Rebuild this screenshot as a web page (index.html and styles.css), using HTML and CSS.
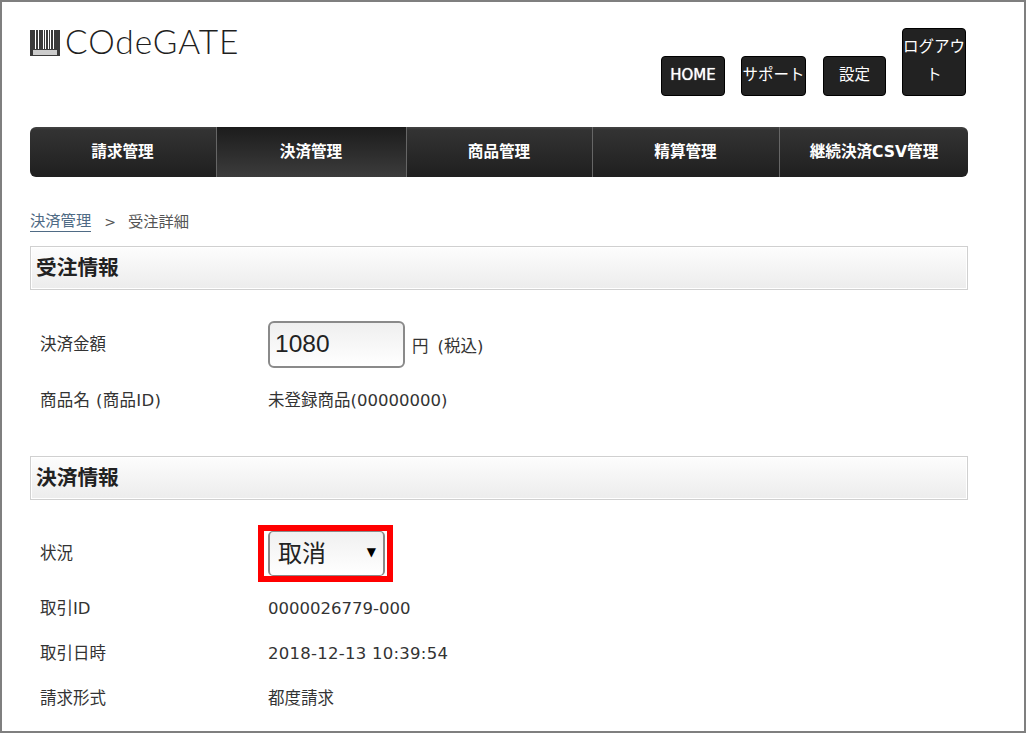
FILE: index.html
```html
<!DOCTYPE html>
<html lang="ja">
<head>
<meta charset="utf-8">
<title>受注詳細</title>
<link rel="stylesheet" href="styles.css">
</head>
<body>
<div class="frame">
  <header class="header">
    <div class="logo">
      <svg class="barcode" width="30" height="26" viewBox="0 0 30 26" aria-hidden="true">
        <rect width="30" height="26" fill="#3a3a3a"/>
        <g fill="#fff">
          <rect x="5" y="0" width="1" height="19"/>
          <rect x="8" y="0" width="1" height="19"/>
          <rect x="13" y="0" width="1" height="19"/>
          <rect x="15" y="0" width="1" height="19"/>
          <rect x="18" y="0" width="1" height="19"/>
          <rect x="20" y="0" width="1" height="19"/>
          <rect x="23" y="0" width="1" height="19"/>
          <rect x="3" y="20" width="24" height="5" fill="#ccc"/>
        </g>
      </svg>
      <span class="logo-text">COdeGATE</span>
    </div>
    <nav class="tools">
      <a class="tool tool-home">HOME</a>
      <a class="tool tool-support">サポート</a>
      <a class="tool tool-settings">設定</a>
      <a class="tool tool-logout">ログアウト</a>
    </nav>
  </header>

  <nav class="tabs">
    <a class="tab">請求管理</a>
    <a class="tab tab-active">決済管理</a>
    <a class="tab">商品管理</a>
    <a class="tab">精算管理</a>
    <a class="tab tab-last">継続決済CSV管理</a>
  </nav>

  <div class="crumbs">
    <a class="crumb-link">決済管理</a>
    <span class="crumb-sep">&gt;</span>
    <span>受注詳細</span>
  </div>

  <h2 class="section">受注情報</h2>
  <div class="row row-input">
    <div class="label">決済金額</div>
    <div class="value value-input">
      <input class="amount" type="text" value="1080">
      <span class="unit">円</span><span class="tax">(税込)</span>
    </div>
  </div>
  <div class="row">
    <div class="label label-wide">商品名 (商品ID)</div>
    <div class="value value-cjk">未登録商品(00000000)</div>
  </div>

  <h2 class="section section-second">決済情報</h2>
  <div class="row row-select">
    <div class="label">状況</div>
    <div class="value">
      <div class="highlight">
        <div class="select"><span class="select-text">取消</span><span class="arrow">▼</span></div>
      </div>
    </div>
  </div>
  <div class="row">
    <div class="label">取引ID</div>
    <div class="value">0000026779-000</div>
  </div>
  <div class="row">
    <div class="label">取引日時</div>
    <div class="value value-date">2018-12-13 10:39:54</div>
  </div>
  <div class="row">
    <div class="label">請求形式</div>
    <div class="value value-cjk">都度請求</div>
  </div>
</div>
</body>
</html>
```
FILE: styles.css
```css
* { box-sizing: border-box; }
html, body { margin: 0; padding: 0; background: #fff; }
body {
  font-family: "DejaVu Sans", "Noto Sans CJK JP", sans-serif;
  font-size: 16.5px;
  color: #333;
}
.frame {
  width: 1026px;
  height: 733px;
  border: 2px solid #7f7f7f;
  padding: 26px 0 0 28px;
  overflow: hidden;
  background: #fff;
}
.header {
  display: flex;
  width: 938px;
  height: 99px;
  justify-content: space-between;
}
.logo {
  display: flex;
  align-items: center;
  gap: 5px;
  height: 30px;
  align-self: flex-start;
  margin-top: -2px;
}
.barcode { display: block; margin-top: 3px; }
.logo-text {
  font-family: "Lato", sans-serif;
  font-weight: 300;
  font-size: 33.5px;
  letter-spacing: 0.9px;
  line-height: 30px;
  color: #1f1f1f;
}
.tools {
  display: flex;
  align-items: flex-end;
  gap: 16px;
  padding: 0 2px 31px 0;
}
.tool {
  display: block;
  width: 64px;
  padding: 4px 0 6px;
  border: 1px solid #000;
  border-radius: 4px;
  background: #222;
  color: #fff;
  font-size: 15.5px;
  line-height: 28px;
  text-align: center;
  font-family: "Liberation Sans", "Noto Sans CJK JP", sans-serif;
}
.tool-home {
  font-family: "DejaVu Sans", sans-serif;
  font-size: 15px;
  text-shadow: 0 0 1px #fff;
}
.tool-support { width: 65px; white-space: nowrap; }
.tool-settings { width: 63px; margin-left: 1px; }
.tabs {
  display: grid;
  grid-template-columns: 187fr 190fr 186fr 187fr 188fr;
  width: 938px;
  height: 50px;
  border-radius: 6px;
  overflow: hidden;
}
.tab {
  display: flex;
  align-items: center;
  justify-content: center;
  padding: 0 1px 4px 0;
  background: linear-gradient(#444 0, #333 6%, #1f1f1f 100%);
  border-right: 1px solid #666;
  color: #fff;
  font-weight: 700;
  font-size: 15.6px;
  white-space: nowrap;
}
.tab-active { background: linear-gradient(#1c1c1c, #3c3c3c); }
.tab-last { border-right: 0; padding-right: 0; }
.crumbs {
  display: flex;
  align-items: center;
  height: 20px;
  margin: 35px 0 14px;
  font-size: 15.3px;
  line-height: 19px;
  color: #555;
}
.crumb-link { color: #4f6b85; border-bottom: 1px solid #4f6b85; }
.crumb-sep { margin: 0 12px 0 13px; font-size: 14px; }
.section {
  display: flex;
  align-items: center;
  width: 938px;
  height: 44px;
  margin: 0;
  padding: 0 0 4px 5px;
  border: 1px solid #d0d0d0;
  box-shadow: inset 0 0 0 1px #fff;
  background: linear-gradient(#fdfdfd, #ececec);
  font-size: 20.7px;
  font-weight: 700;
  color: #222;
}
.section-second { margin-top: 33px; }
.row {
  display: flex;
  align-items: center;
  min-height: 45px;
}
.label { width: 238px; padding: 0 0 4px 10px; flex: none; }
.label-wide { letter-spacing: 0.3px; }
.value { flex: none; }
.value-cjk { padding-bottom: 4px; }
.value-date { letter-spacing: 0.26px; }
.row-input { margin-top: 31px; margin-bottom: 10px; min-height: 47px; }
.value-input { display: flex; align-items: center; }
.amount {
  width: 137px;
  height: 47px;
  padding: 0 5px 2px;
  border: 2px solid #8a8a8a;
  border-radius: 6px;
  background: linear-gradient(#efefef, #fff);
  font-family: "Liberation Sans", sans-serif;
  font-size: 24.5px;
  color: #222;
}
.unit { margin-left: 7px; }
.tax { margin-left: 9px; }
.row-select { margin-top: 25px; margin-bottom: 4px; min-height: 57px; }
.highlight {
  display: flex;
  align-items: center;
  width: 135px;
  height: 57px;
  margin-left: -10px;
  padding-left: 4px;
  border: 6px solid #f00;
}
.select {
  position: relative;
  display: flex;
  align-items: center;
  width: 117px;
  height: 45px;
  padding: 0 0 4px 8px;
  border: 2px solid #8a8a8a;
  border-top-width: 1px;
  border-bottom-width: 1px;
  border-radius: 5px;
  background: linear-gradient(#f0f0f0, #fff);
  font-family: "Noto Sans CJK JP", sans-serif;
  font-size: 24px;
  color: #222;
}
.arrow {
  position: absolute;
  right: 7px;
  top: 8px;
  line-height: 24px;
  font-family: "DejaVu Sans", sans-serif;
  font-size: 12px;
  color: #000;
}
```
